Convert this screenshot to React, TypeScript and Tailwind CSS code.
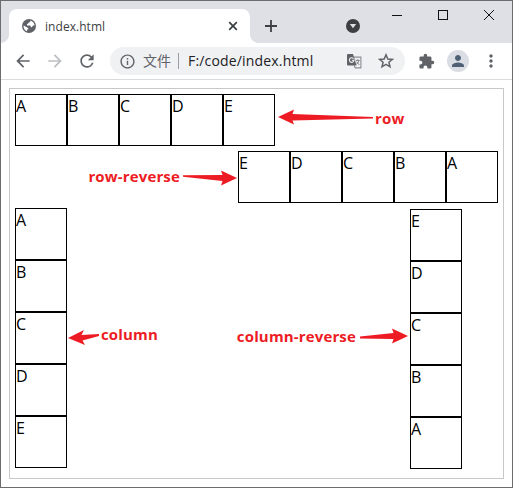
import type { ReactNode } from "react";
import {
  MdArrowBack,
  MdArrowForward,
  MdExtension,
  MdInfoOutline,
  MdMoreVert,
  MdPerson,
  MdRefresh,
} from "react-icons/md";

const letters = ["A", "B", "C", "D", "E"];

function Boxes({ className }: { className: string }) {
  return (
    <div className={`flex shrink-0 ${className}`}>
      {letters.map((l) => (
        <div key={l} className="h-[52px] w-[52px] border border-black text-base leading-[22px]">
          {l}
        </div>
      ))}
    </div>
  );
}

function Label({ className, children }: { className: string; children: ReactNode }) {
  return (
    <span
      className={`shrink-0 whitespace-nowrap font-bold text-[15px] leading-5 tracking-[0.15px] text-[#ed1c24] ${className}`}
    >
      {children}
    </span>
  );
}

function Arrow({ width, points, className }: { width: number; points: string; className: string }) {
  return (
    <svg width={width} height="16" viewBox={`0 0 ${width} 16`} className={`shrink-0 ${className}`}>
      <polygon points={points} fill="#ed1c24" />
    </svg>
  );
}

function Globe() {
  return (
    <svg width="14" height="14" viewBox="0 0 14 14" className="ml-px">
      <circle cx="7" cy="7" r="7" fill="#5f6368" />
      <path
        d="M8.3 1.6C8.6 2.9 7.9 3.4 6.7 3.5 6.5 4.6 5.6 4.8 5 5.1V6.6H7.9C8.6 6.6 8.8 7.3 8.8 8.2 9.8 8.2 10.3 8 10.5 7.2 10.7 6.6 11.5 6.6 12.6 6.6 12.6 5 11.4 2.4 8.3 1.6ZM1.5 6.6 4.8 8.3C6 8.9 6.4 9.3 6.4 10.4H5V12.3C2.9 11.6 1.3 9.4 1.5 6.6Z"
        fill="white"
      />
    </svg>
  );
}

function TranslateIcon({ className }: { className: string }) {
  return (
    <svg width="15" height="15" viewBox="0 0 15 15" className={className} fill="none">
      <path d="M6.5 3.1H13.9V13.9H8.2L7.2 11.5" stroke="#8a8d91" strokeWidth="1.1" />
      <path d="M0 1Q0 0 1 0H6L9.6 11.5H1Q0 11.5 0 10.5Z" fill="#5f6368" />
      <path d="M6.5 4.6A2.3 2.3 0 1 0 7 6.3H4.8" stroke="#f0f1f3" strokeWidth="1.1" />
      <path d="M8.8 6.4H12.7M10.7 5.2V6.4M12 6.4C11.6 8.2 10.5 9.5 9.5 10.3M9.5 7.6 12.4 11" stroke="#777b80" strokeWidth=".9" />
    </svg>
  );
}

function TabStrip() {
  return (
    <div className="flex h-[42px] bg-[#dee0e6] pl-2">
      <div className="relative mt-2 flex w-[241px] items-center rounded-t-lg bg-white pl-3">
        <div className="absolute bottom-0 -left-2 h-2 w-2 bg-[radial-gradient(circle_at_0_0,transparent_7.5px,white_8px)]" />
        <div className="absolute bottom-0 -right-2 h-2 w-2 bg-[radial-gradient(circle_at_100%_0,transparent_7.5px,white_8px)]" />
        <Globe />
        <span className="mt-px ml-[9px] text-[12px] leading-4 tracking-[0.05px] text-[#3c4043]">index.html</span>
        <svg width="10" height="10" viewBox="0 0 10 10" className="mr-[12px] ml-auto">
          <path d="M1.2 1.2 8.8 8.8M8.8 1.2 1.2 8.8" stroke="#3c4043" strokeWidth="1.7" />
        </svg>
      </div>
      <svg width="12" height="12" viewBox="0 0 12 12" className="mt-[19px] ml-[15px]">
        <path d="M6 0V12M0 6H12" stroke="#3c4043" strokeWidth="1.8" />
      </svg>
      <svg width="14" height="14" viewBox="0 0 14 14" className="mt-[18px] ml-[69px]">
        <circle cx="7" cy="7" r="7" fill="#3c4043" />
        <path d="M3.8 5H10.2L7 9.3Z" fill="#dee0e6" />
      </svg>
      <svg width="103" height="12" viewBox="0 0 103 12" className="mt-2 ml-8" fill="none" stroke="#111" shapeRendering="crispEdges">
        <path d="M0 6.5H10" />
        <rect x="46.5" y="1.5" width="9" height="9" />
        <path d="M92 1 102 11M102 1 92 11" shapeRendering="auto" />
      </svg>
    </div>
  );
}

function Toolbar() {
  return (
    <div className="flex h-[37px] items-center border-b border-[#d9dbde] bg-white pl-3 text-[#5f6368]">
      <MdArrowBack size={20} />
      <MdArrowForward size={20} className="ml-3 text-[#bcbec1]" />
      <MdRefresh size={20} className="ml-3" />
      <div className="ml-[13px] flex h-7 w-[295px] shrink-0 items-center rounded-full bg-[#f0f1f3]">
        <MdInfoOutline size={17} className="ml-[9px]" />
        <span className="ml-[7px] text-[14px] leading-5">文件</span>
        <span className="ml-[7px] h-4 w-px bg-[#9a9da1]" />
        <span className="ml-[9px] w-[130px] whitespace-nowrap text-[14px] leading-5 tracking-[0.17px] text-[#202124]">
          F:/code/index.html
        </span>
        <TranslateIcon className="ml-[29px]" />
        <svg width="16" height="16" viewBox="0 0 16 16" fill="none" className="ml-[16px]">
          <path
            d="M8 1.8 9.8 6.1 14.3 6.4 10.9 9.3 12 13.8 8 11.4 4 13.8 5.1 9.3 1.7 6.4 6.2 6.1Z"
            stroke="currentColor"
            strokeWidth="1.5"
          />
        </svg>
      </div>
      <MdExtension size={17} className="ml-[13px]" />
      <span className="ml-[12px] flex h-[22px] w-[22px] items-center justify-center rounded-full bg-[#dadde4]">
        <MdPerson size={18} className="text-[#506074]" />
      </span>
      <MdMoreVert size={20} className="ml-[12px]" />
    </div>
  );
}

export default function App() {
  return (
    <div className="h-[488px] w-[513px] border border-[#6c6c6e] bg-white font-['Open_Sans','Noto_Sans_CJK_SC',sans-serif] text-black">
      <TabStrip />
      <Toolbar />
      <main className="mt-2 ml-2 h-[391px] w-[495px] border border-[#c8c8c8] p-[5px]">
        <div className="flex">
          <Boxes className="flex-row" />
          <Arrow className="mt-[15px] ml-[3px]" width={95} points="0,8 16,.5 14.5,5 95,8 95,9.5 14.5,11.5 16,15.5" />
          <Label className="mt-[14px] ml-[2px]">row</Label>
        </div>
        <div className="mt-[5px] flex justify-end">
          <Label className="mt-[15px] mr-[3px]">row-reverse</Label>
          <Arrow className="mt-[19px] mr-px" width={54} points="54,8 38,.5 39.5,5 0,5.3 0,6.8 39.5,11 38,15.5" />
          <Boxes className="flex-row-reverse" />
        </div>
        <div className="mt-[5px] flex">
          <Boxes className="flex-col" />
          <Arrow className="mt-[121px] ml-px" width={32} points="0,9 16,1 13.5,6 31,5 31,7 14.5,11.5 17,16" />
          <Label className="mt-[116px] ml-px">column</Label>
          <div className="mt-px mr-9 ml-auto flex">
            <Label className="mt-[117px] mr-[4px]">column-reverse</Label>
            <Arrow className="mt-[119px] mr-[2px]" width={48} points="48,8 32,.5 33.5,5 0,8.5 0,10.5 33.5,11 32,15.5" />
            <Boxes className="flex-col-reverse" />
          </div>
        </div>
      </main>
    </div>
  );
}
